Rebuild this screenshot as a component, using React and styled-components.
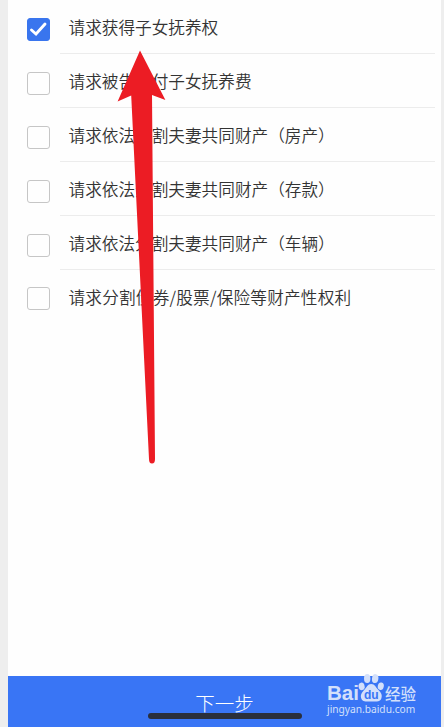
import { useState } from "react";
import styled, { createGlobalStyle } from "styled-components";

const OPTIONS = [
  "请求获得子女抚养权",
  "请求被告支付子女抚养费",
  "请求依法分割夫妻共同财产（房产）",
  "请求依法分割夫妻共同财产（存款）",
  "请求依法分割夫妻共同财产（车辆）",
  "请求分割债券/股票/保险等财产性权利",
];

function App() {
  const [checked, setChecked] = useState([0]);

  const toggle = (index) => {
    setChecked((prev) =>
      prev.includes(index) ? prev.filter((i) => i !== index) : [...prev, index]
    );
  };

  return (
    <>
      <GlobalStyle />
      <Screen>
        <Page>
          <List>
            {OPTIONS.map((label, index) => (
              <Row key={label} onClick={() => toggle(index)}>
                <Checkbox $checked={checked.includes(index)} $last={index === OPTIONS.length - 1}>
                  {checked.includes(index) && <CheckMark />}
                </Checkbox>
                <Label $last={index === OPTIONS.length - 1}>{label}</Label>
              </Row>
            ))}
          </List>
          <NextButton type="button">
            <span>下一步</span>
            <HomeBar />
          </NextButton>
        </Page>
        <Arrow />
        <Watermark />
      </Screen>
    </>
  );
}

function CheckMark() {
  return (
    <svg width="23" height="23" viewBox="0 0 23 23" fill="none">
      <path d="M4.5 12 L9 16 L18 6" stroke="#fff" strokeWidth="2.9" strokeLinecap="round" />
    </svg>
  );
}

function Arrow() {
  return (
    <ArrowSvg width="50" height="414" viewBox="0 0 50 414">
      <path
        d="M23 0.5 L48.4 50 L35 45 L38 409 Q38 413.5 35 413.5 Q32 413.5 32 409 L14.2 45.5 L0.6 51.5 Z"
        fill="#ec1c24"
      />
    </ArrowSvg>
  );
}

function Watermark() {
  return (
    <Mark>
      <Brand>
        <Latin>Bai</Latin>
        <Paw width="27" height="29" viewBox="0 0 27 29">
          <g fill="#d3e0fb">
            <ellipse cx="3.6" cy="13.4" rx="3" ry="3.8" transform="rotate(-12 3.6 13.4)" />
            <ellipse cx="9.2" cy="5.6" rx="3.2" ry="4.5" />
            <ellipse cx="17.2" cy="5.6" rx="3.2" ry="4.5" transform="rotate(8 17.2 5.6)" />
            <ellipse cx="22.8" cy="13.2" rx="3" ry="3.8" transform="rotate(12 22.8 13.2)" />
            <path d="M13.2 11 C16.8 11 18 14.5 20.2 16.7 C23 19.5 24.5 21.5 23.4 25.2 C22.3 28.6 19.2 28.6 13.2 28.4 C7.4 28.6 4.3 28.6 3.2 25.2 C2.2 21.5 3.8 19.5 6.4 16.7 C8.6 14.5 9.6 11 13.2 11Z" />
          </g>
          <text x="13.3" y="26" textAnchor="middle" fontFamily="Liberation Sans, sans-serif" fontWeight="700" fontSize="12" fill="#3975f5">
            du
          </text>
        </Paw>
        <Chinese>经验</Chinese>
      </Brand>
      <Site>jingyan.baidu.com</Site>
    </Mark>
  );
}

const GlobalStyle = createGlobalStyle`
  * {
    box-sizing: border-box;
  }

  body {
    margin: 0;
    overflow: hidden;
    background: #eeeeee;
    font-family: "Noto Sans CJK SC", sans-serif;
  }
`;

const Screen = styled.div`
  position: relative;
  height: 727px;
  padding: 0 3px 0 8px;
  background: #eeeeee;
`;

const Page = styled.main`
  display: flex;
  flex-direction: column;
  height: 100%;
  background: #fefefe;
`;

const List = styled.div`
  flex: 1;
`;

const Row = styled.div`
  display: flex;
  align-items: flex-start;
  height: 54px;
  padding: 0 6px 0 18.6px;
`;

const Checkbox = styled.div`
  display: flex;
  flex: none;
  align-items: center;
  justify-content: center;
  width: 23px;
  height: 23px;
  margin: ${(props) => (props.$last ? "17px" : "18px")} 10.4px 0 0;
  border: 1px solid ${(props) => (props.$checked ? "#3975ee" : "#c6c6c6")};
  border-radius: 3px;
  background: ${(props) => (props.$checked ? "#3975ee" : "#fefefe")};

  svg {
    flex: none;
  }
`;

const Label = styled.div`
  flex: 1;
  height: 54px;
  padding: 2px 0 0 8.5px;
  border-bottom: 1px solid ${(props) => (props.$last ? "transparent" : "#ececec")};
  color: #333;
  font-size: 16.65px;
  font-weight: 350;
  letter-spacing: ${(props) => (props.$last ? "0.2px" : "0")};
  line-height: 51px;
  white-space: nowrap;
`;

const NextButton = styled.button`
  display: flex;
  flex-direction: column;
  align-items: center;
  height: 51px;
  padding: 12px 0 0;
  border: 0;
  background: #3975f5;
  color: #fff;
  font-family: inherit;
  font-size: 19.5px;
  font-weight: 300;
  line-height: 29px;
`;

const HomeBar = styled.i`
  flex: none;
  width: 154px;
  height: 6px;
  margin-top: -4px;
  border-radius: 3px;
  background: #2a2f3c;
`;

const ArrowSvg = styled.svg`
  position: absolute;
  top: 50px;
  left: 117px;
  pointer-events: none;
`;

const Mark = styled.div`
  position: absolute;
  top: 673px;
  left: 327px;
  width: 90px;
  color: #d3e0fb;
  pointer-events: none;
`;

const Brand = styled.div`
  display: flex;
  align-items: flex-end;
  height: 29px;
`;

const Latin = styled.span`
  width: 31px;
  font: 700 20.5px/18px "Liberation Sans", sans-serif;
`;

const Paw = styled.svg`
  flex: none;
`;

const Chinese = styled.span`
  font-size: 15.5px;
  font-weight: 500;
  line-height: 17px;
  white-space: nowrap;
`;

const Site = styled.div`
  padding-top: 1px;
  font: 10.2px/13px "Noto Sans", sans-serif;
`;

export default App;
